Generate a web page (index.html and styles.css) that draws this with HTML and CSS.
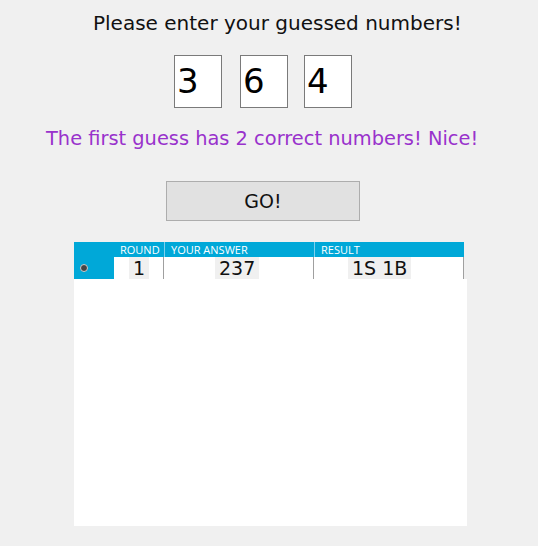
FILE: index.html
```html
<!DOCTYPE html>
<html>
<head>
<meta charset="utf-8">
<link rel="stylesheet" href="styles.css">
</head>
<body>
<div class="app">
  <div class="title">Please enter your guessed numbers!</div>
  <div class="inputs">
    <div class="digit d1">3</div>
    <div class="digit d2">6</div>
    <div class="digit d3">4</div>
  </div>
  <div class="message">The first guess has 2 correct numbers! Nice!</div>
  <div class="go">GO!</div>
  <div class="grid">
    <div class="grid-head">
      <div class="rowhead"></div>
      <div class="col c-round">ROUND</div>
      <div class="col c-answer">YOUR ANSWER</div>
      <div class="col c-result">RESULT</div>
      <div class="spacer"></div>
    </div>
    <div class="grid-row">
      <div class="rowhead"><span class="dot"></span></div>
      <div class="cell c-round"><span class="val">1</span></div>
      <div class="cell c-answer"><span class="val">237</span></div>
      <div class="cell c-result"><span class="val">1S 1B</span></div>
      <div class="spacer"></div>
    </div>
  </div>
</div>
</body>
</html>
```
FILE: styles.css
```css
html, body {
  margin: 0;
  padding: 0;
  background: #f0f0f0;
}
.app {
  width: 538px;
  height: 546px;
  font-family: "DejaVu Sans", sans-serif;
  color: #111;
  padding-top: 10px;
  box-sizing: border-box;
}
.title {
  margin-left: 93px;
  font-size: 20px;
  line-height: 26px;
  height: 26px;
}
.inputs {
  display: flex;
  margin-top: 19px;
  margin-left: 174px;
}
.digit {
  width: 48px;
  height: 53px;
  box-sizing: border-box;
  border: 1px solid #7a7a7a;
  background: #fff;
  font-size: 34px;
  line-height: 50px;
  padding-left: 2px;
  color: #000;
}
.d2 { margin-left: 18px; }
.d3 { margin-left: 16px; }
.message {
  margin-top: 18px;
  margin-left: 46px;
  font-size: 19.4px;
  line-height: 26px;
  height: 26px;
  color: #9932cc;
}
.go {
  margin-top: 29px;
  margin-left: 166px;
  width: 194px;
  height: 40px;
  box-sizing: border-box;
  border: 1px solid #adadad;
  background: #e1e1e1;
  font-size: 19px;
  line-height: 38px;
  text-align: center;
  color: #111;
}
.grid {
  margin-top: 21px;
  margin-left: 74px;
  width: 393px;
  height: 284px;
  background: #fff;
}
.grid-head, .grid-row {
  display: flex;
}
.grid-head {
  height: 15px;
  background: #00a8d8;
}
.grid-row {
  height: 22px;
}
.rowhead {
  width: 40px;
  background: #00a8d8;
  display: flex;
  align-items: center;
}
.spacer {
  width: 3px;
  background: #f0f0f0;
}
.col {
  font-family: "Open Sans", sans-serif;
  font-size: 11px;
  color: #fff;
  line-height: 15px;
  padding-left: 6px;
  box-sizing: border-box;
  border-left: 1px solid #7fd0ec;
}
.c-round { width: 50px; }
.c-answer { width: 150px; }
.c-result { width: 150px; }
.grid-head .c-round { border-left: none; }
.cell {
  box-sizing: border-box;
  border-right: 1px solid #a0a0a0;
  background: #fff;
  display: flex;
}
.cell.c-round { padding-left: 15px; }
.cell.c-answer { padding-left: 51px; }
.cell.c-result { padding-left: 34px; }
.val {
  background: #f0f0f0;
  font-size: 19px;
  line-height: 22px;
  height: 22px;
  padding: 0 4px;
  color: #111;
}
.dot {
  display: block;
  margin-left: 6px;
  width: 6px;
  height: 6px;
  border-radius: 50%;
  background: #444;
  border: 1px solid #ccc;
}
```
